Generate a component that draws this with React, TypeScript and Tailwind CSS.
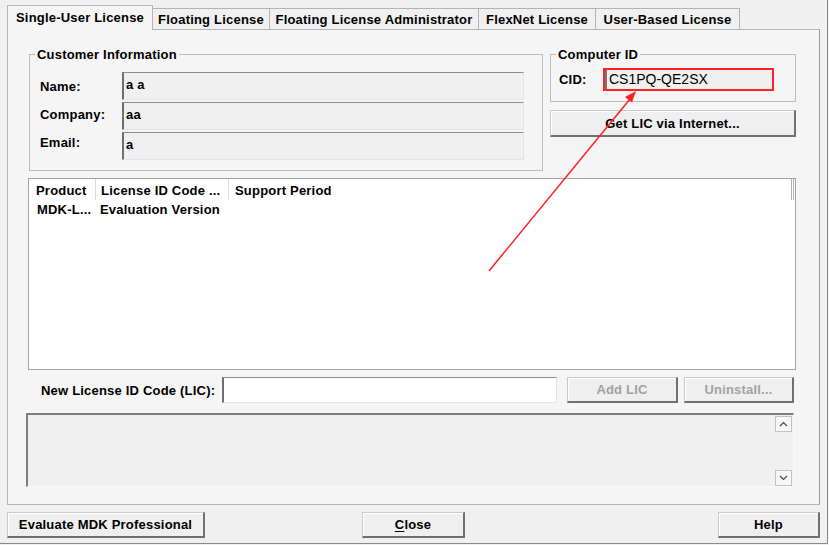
import type { ReactNode } from "react";

// classic 3D edges
const raised =
  "bg-[#efefef] border-t border-l border-[#c9c9c9] border-r-2 border-b-2 border-r-[#707070] border-b-[#707070] shadow-[inset_1px_1px_0_#ffffff]";
const sunken =
  "border-t border-l-2 border-t-[#8e8e8e] border-l-[#6f6f6f] border-r border-b border-r-[#e4e4e4] border-b-[#e4e4e4]";

function Tab({ label, width, active }: { label: string; width: string; active?: boolean }) {
  if (active) {
    return (
      <div
        className={`${width} relative z-10 -mb-px h-[25px] flex items-start justify-center pt-[4px] bg-[#f5f5f5] border-t border-l border-r border-[#b4b4b4]`}
      >
        {label}
      </div>
    );
  }
  return (
    <div
      className={`${width} h-[21px] flex items-center justify-center pt-px bg-[#f0f0f0] border-t border-r border-[#b4b4b4]`}
    >
      {label}
    </div>
  );
}

function Button({
  children,
  className = "",
  disabled,
}: {
  children: ReactNode;
  className?: string;
  disabled?: boolean;
}) {
  return (
    <button
      type="button"
      className={`${raised} ${className} flex items-center justify-center ${
        disabled ? "text-[#a2a2a2]" : "text-black"
      }`}
    >
      {children}
    </button>
  );
}

function Field({ value }: { value: string }) {
  return (
    <div className={`w-[402px] h-[28px] bg-[#f0f0f0] ${sunken} pl-[2px] pt-[4px] leading-[15px]`}>
      {value}
    </div>
  );
}

function ScrollArrow({ up }: { up?: boolean }) {
  return (
    <div className="w-[17px] h-[16px] bg-[#f7f7f7] border border-[#c2c2c2] flex items-center justify-center">
      <svg width="9" height="6" viewBox="0 0 9 6">
        <polyline
          points={up ? "1,5 4.5,1.5 8,5" : "1,1 4.5,4.5 8,1"}
          fill="none"
          stroke="#4a4a4a"
          strokeWidth="1.2"
        />
      </svg>
    </div>
  );
}

export default function App() {
  return (
    <div className="w-[829px] h-[545px] bg-[#f0f0f0] overflow-hidden">
      <div className="relative w-[828px] h-[544px] border-r border-b border-[#8a8a8a] pt-[5px] pl-[7px] font-['Liberation_Sans',Arial,sans-serif] font-bold text-[13px] tracking-[0.2px] text-black leading-[15px]">
        {/* tab strip */}
        <div className="flex items-end h-[24px]">
          <Tab label="Single-User License" width="w-[146px]" active />
          <Tab label="Floating License" width="w-[117px]" />
          <Tab label="Floating License Administrator" width="w-[209px]" />
          <Tab label="FlexNet License" width="w-[117px]" />
          <Tab label="User-Based License" width="w-[144px]" />
        </div>

        {/* tab page */}
        <div className="w-[813px] h-[476px] border border-[#b4b4b4] border-r-[#9a9a9a] bg-[#f5f5f5] pl-[21px] pt-[17px]">
          <div className="flex items-start gap-[7px]">
            <fieldset className="w-[514px] border border-[#bcbcbc]">
              <legend className="ml-[5px] px-[2px] leading-[15px]">Customer Information</legend>
              <div className="flex mt-[10px] pb-[10px]">
                <div className="w-[92px] pl-[10px] flex flex-col">
                  <div className="h-[28px] flex items-center">Name:</div>
                  <div className="h-[28px] flex items-center">Company:</div>
                  <div className="h-[28px] flex items-center">Email:</div>
                </div>
                <div className="flex flex-col gap-[2px]">
                  <Field value="a a" />
                  <Field value="aa" />
                  <Field value="a" />
                </div>
              </div>
            </fieldset>

            <div className="w-[246px] flex flex-col">
              <fieldset className="border border-[#bcbcbc]">
                <legend className="ml-[5px] px-[2px] leading-[15px]">Computer ID</legend>
                <div className="flex items-center mt-[6px] pb-[10px]">
                  <div className="w-[52px] pl-[8px]">CID:</div>
                  <div className="w-[171px] h-[23px] border-2 border-[#ff2222]">
                    <div className="h-full bg-[#f0f0f0] border-l-2 border-[#777777] pl-[2px] flex items-center font-normal text-[14px] tracking-normal">
                      CS1PQ-QE2SX
                    </div>
                  </div>
                </div>
              </fieldset>
              <Button className="mt-[8px] h-[27px] w-full">Get LIC via Internet...</Button>
            </div>
          </div>

          {/* installed licenses */}
          <div className="mt-[7px] -ml-px w-[768px] h-[192px] border border-[#a3a3a3] bg-white">
            <div className="flex h-[21px]">
              <div className="w-[67px] pl-[7px] pt-px flex items-center border-r border-[#dadada]">Product</div>
              <div className="w-[133px] pl-[5px] pt-px flex items-center border-r border-[#dadada]">
                License ID Code ...
              </div>
              <div className="flex-1 pl-[6px] pt-px flex items-center">Support Period</div>
              <div className="w-[3px] mr-px border-l border-r border-[#b0b0b0]" />
            </div>
            <div className="flex h-[18px] items-center pt-px">
              <div className="w-[67px] pl-[8px]">MDK-L...</div>
              <div className="pl-[4px]">Evaluation Version</div>
            </div>
          </div>

          {/* new LIC entry */}
          <div className="mt-[7px] flex items-center h-[26px]">
            <div className="w-[193px] pl-[12px]">New License ID Code (LIC):</div>
            <div className={`w-[335px] h-[26px] bg-white ${sunken}`} />
            <Button disabled className="ml-[10px] w-[111px] h-[26px]">
              Add LIC
            </Button>
            <Button disabled className="ml-[6px] w-[110px] h-[26px]">
              Uninstall...
            </Button>
          </div>

          {/* message box */}
          <div className="mt-[10px] -ml-[3px] w-[768px] h-[74px] bg-[#f0f0f0] border-t-2 border-l-2 border-[#7d7d7d] border-r border-b border-r-[#fafafa] border-b-[#fafafa] flex justify-end">
            <div className="flex flex-col justify-between pt-px pr-px">
              <ScrollArrow up />
              <ScrollArrow />
            </div>
          </div>
        </div>

        {/* dialog buttons */}
        <div className="mt-[7px] w-[813px] flex">
          <Button className="w-[198px] h-[26px]">Evaluate MDK Professional</Button>
          <Button className="ml-[157px] w-[103px] h-[26px]">
            <span className="underline underline-offset-2">C</span>lose
          </Button>
          <Button className="ml-auto w-[102px] h-[26px]">Help</Button>
        </div>

        {/* red pointer to the CID */}
        <svg
          className="absolute left-0 top-0 pointer-events-none"
          width="829"
          height="545"
          viewBox="0 0 829 545"
        >
          <line x1="489" y1="271" x2="630" y2="99" stroke="#ff2020" strokeWidth="1.5" />
          <polygon points="636,91 632,102.5 625,97" fill="#ff2020" />
        </svg>
      </div>
    </div>
  );
}
